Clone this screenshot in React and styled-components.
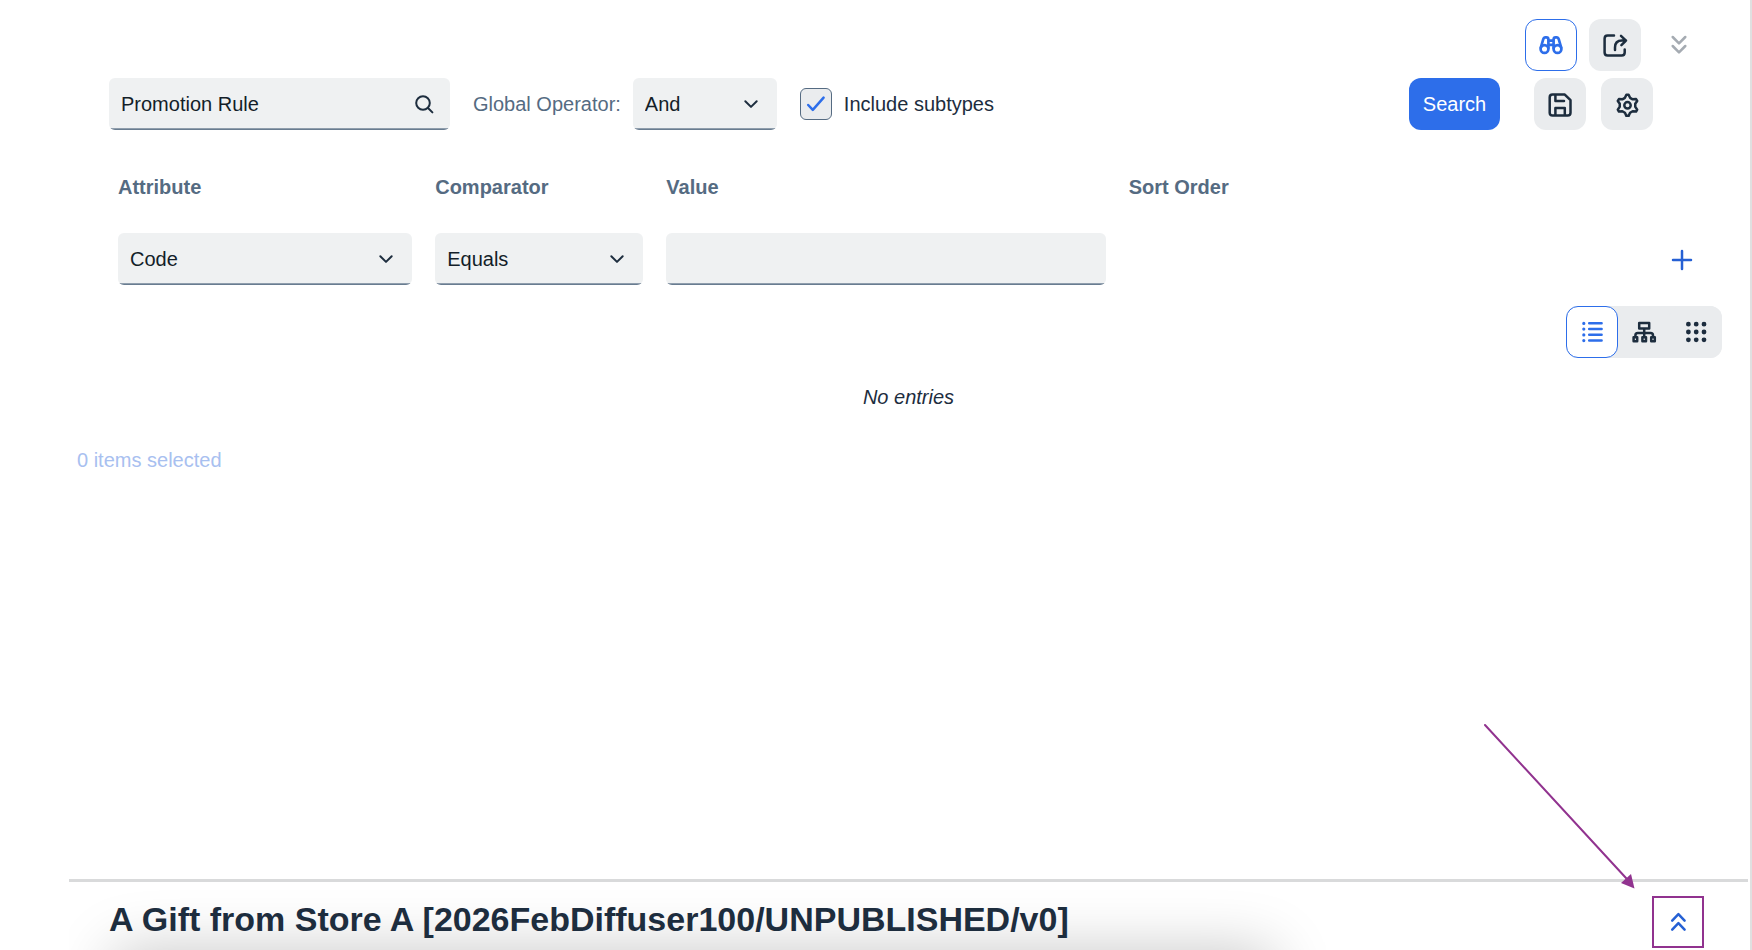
import React, { useState } from "react";
import styled, { createGlobalStyle, css } from "styled-components";

const color = {
  ink: "#1d2d3e",
  field: "#131e29",
  label: "#556b82",
  blue: "#2d6eea",
  link: "#2560d4",
  fieldBg: "#eff1f2",
  buttonBg: "#eaecee",
  mark: "#91338f",
};

const GlobalStyle = createGlobalStyle`
  * { box-sizing: border-box; }
  body {
    margin: 0;
    background: #fff;
    color: ${color.ink};
    font-family: "Liberation Sans", Arial, sans-serif;
    font-size: 20px;
    line-height: 24px;
  }
  button, input, select { font: inherit; margin: 0; }
`;

const Page = styled.div`
  position: relative;
  display: flex;
  flex-direction: column;
  min-height: 100vh;
  padding: 19px 2px 0 69px;
  border-right: 2px solid #e0e0e0;
`;

const Browser = styled.main`
  flex: 1;
  display: flex;
  flex-direction: column;
`;

const TopActions = styled.div`
  display: flex;
  justify-content: flex-end;
  gap: 12px;
  padding-right: 43px;
`;

const SearchBar = styled.form`
  display: flex;
  align-items: center;
  margin-top: 7px;
  padding: 0 95px 0 40px;
`;

const buttonBase = css`
  display: flex;
  align-items: center;
  justify-content: center;
  height: 52px;
  padding: 0;
  border: 1px solid transparent;
  border-radius: 12px;
  cursor: pointer;
`;

const IconButton = styled.button`
  ${buttonBase}
  width: 52px;
  flex: none;
  color: ${(p) => (p.$active ? color.blue : color.ink)};
  background: ${(p) => (p.$active ? "#fff" : color.buttonBg)};
  ${(p) => p.$active && `border-color: ${color.blue};`}
`;

const PlainButton = styled(IconButton)`
  color: ${(p) => (p.disabled ? "#a5abb2" : color.link)};
  background: transparent;
  cursor: ${(p) => (p.disabled ? "default" : "pointer")};
`;

const MarkedButton = styled(PlainButton)`
  border: 2px solid ${color.mark};
  border-radius: 0;
`;

const PrimaryButton = styled.button`
  ${buttonBase}
  width: 91px;
  margin-left: auto;
  color: #fff;
  background: ${color.blue};
`;

const SideButtons = styled.div`
  display: flex;
  gap: 15px;
  margin-left: 34px;
`;

const FieldFrame = styled.div`
  position: relative;
  display: flex;
  align-items: center;
  width: ${(p) => p.$width || "100%"};
  height: 52px;
  border-radius: 6px;
  background: linear-gradient(#a3afbb, ${color.label}) bottom / 100% 2px no-repeat ${color.fieldBg};
`;

const fieldText = css`
  width: 100%;
  height: 100%;
  padding: 0 48px 0 12px;
  border: 0;
  outline: 0;
  border-radius: 6px;
  color: ${color.field};
  background: transparent;
`;

const TextInput = styled.input`
  ${fieldText}
`;

const SelectInput = styled.select`
  ${fieldText}
  appearance: none;
`;

const FieldIcon = styled.span`
  position: absolute;
  right: 13px;
  display: flex;
  pointer-events: none;
`;

const OperatorLabel = styled.label`
  margin: 0 12px 0 23px;
  color: ${color.label};
`;

const CheckLabel = styled.label`
  display: flex;
  align-items: center;
  gap: 12px;
  margin-left: 23px;
`;

const CheckFrame = styled.span`
  position: relative;
  display: flex;
  width: 32px;
  height: 32px;
  color: ${color.blue};
`;

const CheckInput = styled.input`
  appearance: none;
  width: 32px;
  height: 32px;
  border: 1px solid ${color.label};
  border-radius: 6px;
  background: ${color.buttonBg};
`;

const CheckMark = styled.svg`
  position: absolute;
  inset: 0;
  pointer-events: none;
`;

const Conditions = styled.div`
  display: grid;
  grid-template-columns: 294fr 208fr 439fr 504fr 52px;
  column-gap: 23px;
  row-gap: 34px;
  align-items: center;
  margin-top: 45px;
  padding: 0 40px 0 49px;
`;

const HeaderLabel = styled.label`
  color: ${color.label};
  font-weight: 700;
`;

const AddButton = styled(PlainButton)`
  grid-column: 5;
`;

const ViewRow = styled.div`
  display: flex;
  justify-content: flex-end;
  margin-top: 21px;
  padding-right: 26px;
`;

const Segments = styled.div`
  display: flex;
  border-radius: 12px;
  background: ${color.buttonBg};
`;

const EmptyMessage = styled.p`
  margin: 27px 0 0;
  text-align: center;
  font-style: italic;
`;

const SelectionCount = styled.p`
  margin: 39px 0 0 8px;
  color: #a8c0f0;
`;

const EditorPanel = styled.section`
  position: relative;
  display: flex;
  justify-content: space-between;
  align-items: flex-start;
  height: 71px;
  padding: 14px 44px 0 40px;
  border-top: 3px solid #d9dadb;
  overflow: hidden;
`;

const PanelShadow = styled.div`
  position: absolute;
  top: 100%;
  left: 45px;
  width: 69%;
  height: 80px;
  box-shadow: 0 0 60px rgba(0, 0, 0, 0.22);
`;

const Title = styled.h1`
  position: relative;
  margin: 0;
  font-size: 34px;
  line-height: 46px;
  font-weight: 700;
  white-space: nowrap;
`;

const Pointer = styled.svg`
  position: absolute;
  right: 114px;
  bottom: 60px;
  pointer-events: none;
`;

function Icon({ children, width = 2.5 }) {
  return (
    <svg
      width="26"
      height="26"
      viewBox="0 0 26 26"
      fill="none"
      stroke="currentColor"
      strokeWidth={width}
      strokeLinecap="round"
      strokeLinejoin="round"
      aria-hidden="true"
    >
      {children}
    </svg>
  );
}

const polar = (deg, r) => {
  const a = (deg * Math.PI) / 180;
  return `${(13.5 + r * Math.sin(a)).toFixed(2)} ${(14.3 - r * Math.cos(a)).toFixed(2)}`;
};
const gearPath =
  "M" +
  [0, 60, 120, 180, 240, 300]
    .map((d) => `${polar(d - 6, 10.6)}L${polar(d + 6, 10.6)}L${polar(d + 19, 7.9)}L${polar(d + 41, 7.9)}`)
    .join("L") +
  "Z";

const BinocularsIcon = () => (
  <Icon width={2.7}>
    <circle cx="6.5" cy="17" r="3.9" />
    <circle cx="19.5" cy="17" r="3.9" />
    <path d="M2.8 15.6 5.2 7.400Q5.800 5.400 7.400 5.400H8.400Q10.400 5.400 10.400 7.400V16M23.200 15.600 20.800 7.400Q20.200 5.400 18.600 5.400H17.600Q15.600 5.400 15.600 7.400V16M10.400 8.600H15.600M10.400 12.800H15.600" />
  </Icon>
);
const ShareIcon = () => (
  <Icon>
    <path d="M12 3.6H5.6Q2.6 3.6 2.6 6.6V20.5Q2.6 23.5 5.6 23.5H19.7Q22.7 23.5 22.7 20.5V17.5" />
    <path d="M13 18V15.5Q13 8.6 20 8.6H24M19 3.8 24 8.6 19.4 13.2" />
  </Icon>
);
const SaveIcon = () => (
  <Icon>
    <path d="M2.7 6.4Q2.7 3.6 5.5 3.6H17.8L23.5 9.2V21.8Q23.5 24.6 20.7 24.6H5.5Q2.7 24.6 2.7 21.8ZM8.4 3.8V10H17M8.4 24.4V17H17.8V24.4" />
  </Icon>
);
const GearIcon = () => (
  <Icon>
    <path d={gearPath} />
    <circle cx="13.5" cy="14.3" r="3.2" />
  </Icon>
);
const SearchIcon = () => (
  <Icon width={2}>
    <circle cx="12" cy="12" r="6.8" />
    <path d="m17 17 4.4 4.4" />
  </Icon>
);
const ChevronIcon = () => (
  <Icon width={2}>
    <path d="m7.3 10.2 5.7 5.7 5.7-5.7" />
  </Icon>
);
const CollapseIcon = () => (
  <Icon>
    <path d="m6.7 5 6.3 6.4L19.3 5M6.7 14l6.3 6.4 6.3-6.4" />
  </Icon>
);
const ExpandIcon = () => (
  <Icon>
    <path d="m7.200 11.600 6.200-6.400 6.200 6.400M7.200 20.600l6.200-6.400 6.200 6.400" />
  </Icon>
);
const PlusIcon = () => (
  <Icon>
    <path d="M13 5v18M4 14h18" />
  </Icon>
);
const ListIcon = () => (
  <Icon width={2.5}>
    <path d="M10.2 4.2H22.6M10.2 9.9H22.6M10.2 15.7H22.6M10.2 21.4H22.6" />
    <path strokeWidth="3.2" d="M4.8 4.4h.01M4.8 10.1h.01M4.8 15.9h.01M4.8 21.6h.01" />
  </Icon>
);
const TreeIcon = () => (
  <Icon width={2.5}>
    <path d="M8.2 4h10v5.6h-10zM13.2 9.6V17M4.4 17v-.6Q4.4 14 6.8 14h12.8Q22 14 22 16.4V17" />
    <path d="M2.6 18.2h3.6v4H2.6zM11.4 18.2H15v4h-3.6zM20.2 18.2h3.6v4h-3.6z" />
  </Icon>
);
const GridIcon = () => (
  <Icon width={4.8}>
    <path d="M5.4 5.2h.01M13.2 5.2h.01M21 5.2h.01M5.4 13h.01M13.2 13h.01M21 13h.01M5.4 20.8h.01M13.2 20.8h.01M21 20.8h.01" />
  </Icon>
);

function Select({ id, width, options }) {
  return (
    <FieldFrame $width={width}>
      <SelectInput id={id}>
        {options.map((o) => (
          <option key={o}>{o}</option>
        ))}
      </SelectInput>
      <FieldIcon>
        <ChevronIcon />
      </FieldIcon>
    </FieldFrame>
  );
}

const views = [
  ["List view", ListIcon],
  ["Tree view", TreeIcon],
  ["Grid view", GridIcon],
];

export default function App() {
  const [view, setView] = useState("List view");
  const [subtypes, setSubtypes] = useState(true);

  return (
    <>
      <GlobalStyle />
      <Page>
        <Browser>
          <TopActions>
            <IconButton type="button" $active aria-label="Advanced search">
              <BinocularsIcon />
            </IconButton>
            <IconButton type="button" aria-label="Export">
              <ShareIcon />
            </IconButton>
            <PlainButton type="button" disabled aria-label="Collapse">
              <CollapseIcon />
            </PlainButton>
          </TopActions>

          <SearchBar onSubmit={(e) => e.preventDefault()}>
            <FieldFrame $width="341px">
              <TextInput aria-label="Type" defaultValue="Promotion Rule" />
              <FieldIcon>
                <SearchIcon />
              </FieldIcon>
            </FieldFrame>
            <OperatorLabel htmlFor="operator">Global Operator:</OperatorLabel>
            <Select id="operator" width="144px" options={["And"]} />
            <CheckLabel>
              <CheckFrame>
                <CheckInput type="checkbox" checked={subtypes} onChange={(e) => setSubtypes(e.target.checked)} />
                {subtypes && (
                  <CheckMark width="32" height="32" viewBox="0 0 32 32" fill="none" stroke="currentColor" strokeWidth="2.5" strokeLinecap="round" strokeLinejoin="round">
                    <path d="m8.2 17 4.6 4.8L23.6 9.6" />
                  </CheckMark>
                )}
              </CheckFrame>
              Include subtypes
            </CheckLabel>
            <PrimaryButton type="submit">Search</PrimaryButton>
            <SideButtons>
              <IconButton type="button" aria-label="Save query">
                <SaveIcon />
              </IconButton>
              <IconButton type="button" aria-label="Settings">
                <GearIcon />
              </IconButton>
            </SideButtons>
          </SearchBar>

          <Conditions>
            <HeaderLabel htmlFor="attribute">Attribute</HeaderLabel>
            <HeaderLabel htmlFor="comparator">Comparator</HeaderLabel>
            <HeaderLabel htmlFor="value">Value</HeaderLabel>
            <HeaderLabel as="span">Sort Order</HeaderLabel>
            <span />
            <Select id="attribute" options={["Code"]} />
            <Select id="comparator" options={["Equals"]} />
            <FieldFrame>
              <TextInput id="value" />
            </FieldFrame>
            <AddButton type="button" aria-label="Add condition">
              <PlusIcon />
            </AddButton>
          </Conditions>

          <ViewRow>
            <Segments>
              {views.map(([name, Glyph]) => (
                <IconButton key={name} type="button" aria-label={name} $active={view === name} onClick={() => setView(name)}>
                  <Glyph />
                </IconButton>
              ))}
            </Segments>
          </ViewRow>

          <EmptyMessage>No entries</EmptyMessage>
          <SelectionCount>0 items selected</SelectionCount>
        </Browser>

        <EditorPanel>
          <PanelShadow />
          <Title>A Gift from Store A [2026FebDiffuser100/UNPUBLISHED/v0]</Title>
          <MarkedButton type="button" aria-label="Expand editor">
            <ExpandIcon />
          </MarkedButton>
        </EditorPanel>

        <Pointer width="152" height="166" viewBox="0 0 152 166" aria-hidden="true">
          <path d="M1 1 142 154" stroke={color.mark} strokeWidth="2" strokeLinecap="round" />
          <path d="M150.5 164.5 137 159 147 150Z" fill={color.mark} />
        </Pointer>
      </Page>
    </>
  );
}
